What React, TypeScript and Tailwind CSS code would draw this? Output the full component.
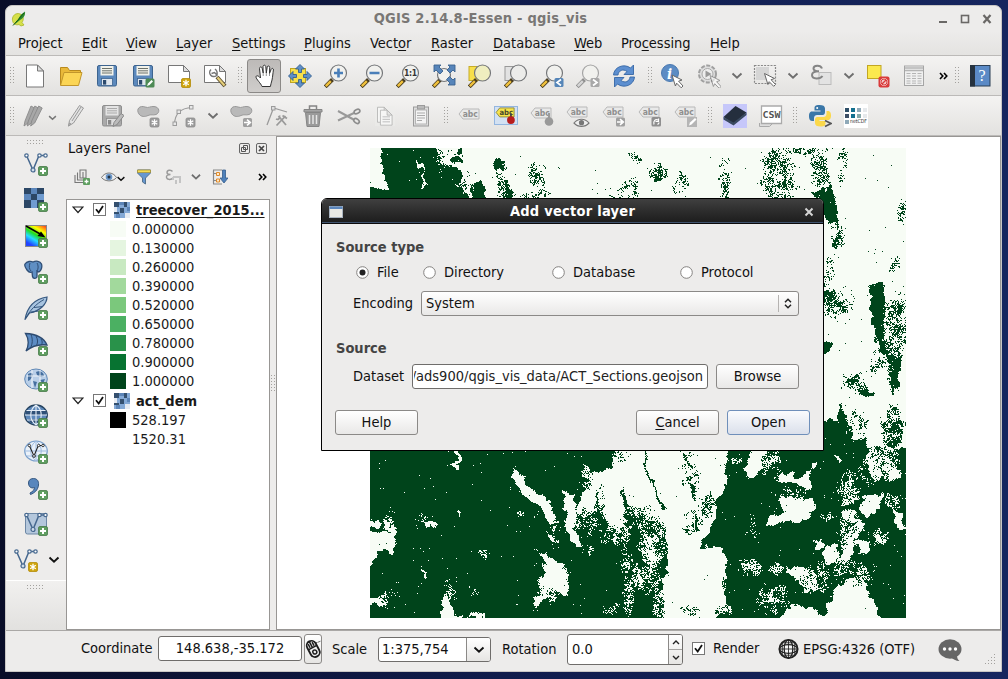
import React from "react";

type Pt = [number, number];
type Sheet = { ox: number; oy: number; s: number };

/* ---------- raster layer ---------- */

const MAP_X = 370;
const MAP_Y = 148;
const MAP_W = 536;
const MAP_H = 470;

const TOP: Sheet = { ox: 365, oy: 140, s: 2.85 };
const WEST: Sheet = { ox: 365, oy: 445, s: 3 };
const EAST: Sheet = { ox: 635, oy: 445, s: 3 };

const poly = (sh: Sheet, dark: boolean, c: number[]) => {
  const pts: Pt[] = [];
  for (let i = 0; i < c.length; i += 2) pts.push([sh.ox + c[i] / sh.s - MAP_X, sh.oy + c[i + 1] / sh.s - MAP_Y]);
  const xs = pts.map((p) => p[0]);
  const ys = pts.map((p) => p[1]);
  return { pts, dark, x0: Math.min(...xs) - 4, x1: Math.max(...xs) + 4, y0: Math.min(...ys) - 4, y1: Math.max(...ys) + 4 };
};

const shapes = [
  poly(TOP, true, [40, 10, 205, 10, 212, 60, 272, 82, 275, 130, 305, 190, -10, 190, -10, 138, 60, 138, 48, 80]),
  poly(TOP, false, [135, 52, 150, 60, 168, 78, 172, 130, 165, 130, 163, 85, 150, 75]),
  poly(TOP, false, [22, 120, 34, 120, 32, 140, 20, 135]),
  poly(TOP, true, [245, 45, 275, 48, 275, 62, 248, 58]),
  poly(TOP, true, [262, 22, 278, 22, 270, 40, 258, 38]),
  poly(TOP, true, [306, 130, 325, 108, 344, 130, 342, 190, 298, 180]),
  poly(TOP, true, [376, 125, 400, 116, 422, 150, 414, 174, 391, 165]),
  poly(TOP, true, [367, 58, 393, 56, 389, 82, 369, 84]),
  poly(TOP, true, [369, 80, 390, 120, 375, 106]),
  poly(TOP, true, [1276, 68, 1309, 64, 1322, 112, 1298, 124]),
  poly(TOP, true, [1273, 146, 1332, 130, 1342, 180, 1352, 235, 1323, 237, 1298, 190]),
  poly(TOP, true, [1140, 111, 1164, 106, 1162, 139, 1141, 142]),
  poly(TOP, true, [1170, 56, 1199, 51, 1205, 79, 1176, 90]),
  poly(TOP, true, [817, 84, 842, 85, 860, 108, 823, 113]),
  poly(TOP, true, [1300, 433, 1337, 428, 1342, 457, 1300, 462]),
  poly(TOP, true, [1300, 573, 1327, 578, 1327, 602, 1300, 610]),
  poly(TOP, true, [1395, 668, 1414, 678, 1402, 702, 1368, 692]),
  poly(TOP, true, [1405, 703, 1452, 718, 1447, 734, 1408, 722]),
  poly(TOP, true, [1436, 413, 1478, 406, 1480, 490, 1474, 560, 1500, 598, 1524, 608, 1528, 660, 1505, 736, 1492, 690, 1488, 640, 1458, 570, 1440, 510]),
  poly(TOP, true, [1486, 773, 1520, 760, 1532, 820, 1522, 867, 1488, 882]),
  poly(TOP, true, [1300, 800, 1342, 795, 1356, 752, 1376, 790, 1392, 822, 1385, 850, 1425, 850, 1428, 980, 1190, 980, 1250, 920]),
  poly(TOP, true, [1425, 880, 1470, 875, 1545, 880, 1560, 980, 1425, 980]),
  poly(TOP, false, [1435, 905, 1470, 900, 1475, 960, 1440, 960]),
  poly(WEST, false, [272, 10, 284, 10, 284, 50, 270, 75, 260, 65, 273, 50]),
  poly(WEST, false, [433, 92, 450, 72, 470, 95, 485, 120, 520, 150, 559, 166, 560, 195, 577, 237, 545, 230, 525, 185, 476, 149, 454, 114]),
  poly(WEST, false, [508, 310, 550, 336, 600, 368, 612, 390, 606, 454, 560, 434, 545, 465, 506, 489, 504, 460, 525, 440, 517, 397, 536, 390, 536, 350]),
  poly(WEST, false, [-10, 263, 62, 262, 58, 216, 88, 232, 94, 270, 79, 329, 62, 306, 40, 316, 20, 352, -10, 367]),
  poly(WEST, false, [-10, 221, 47, 230, 42, 246, -10, 238]),
  poly(WEST, false, [-10, 454, 55, 450, 70, 474, -10, 474]),
  poly(WEST, false, [225, 535, 233, 443, 255, 448, 264, 495, 300, 535]),
  poly(WEST, false, [298, 522, 325, 497, 354, 502, 366, 535, 345, 517, 325, 512]),
  poly(WEST, false, [181, 222, 206, 228, 214, 252, 186, 244]),
  poly(WEST, false, [266, 196, 287, 204, 284, 218]),
  poly(WEST, false, [166, 360, 192, 400, 180, 406]),
  poly(WEST, false, [594, 141, 626, 151, 632, 230, 624, 255, 651, 303, 630, 312, 606, 250, 599, 190]),
  poly(WEST, false, [656, 60, 690, 82, 740, 65, 755, 10, 820, 10, 820, 215, 798, 200, 772, 120, 768, 130, 788, 294, 766, 264, 728, 242, 704, 197, 695, 125, 690, 204, 668, 200, 640, 210, 628, 204, 658, 120, 678, 105, 654, 90]),
  poly(WEST, false, [543, 263, 575, 282, 565, 292]),
  poly(EAST, false, [-12, 10, 272, 10, 268, 150, 246, 160, 240, 215, 190, 305, 260, 303, 278, 340, 268, 400, 272, 450, 288, 490, 250, 490, 235, 535, 85, 535, 78, 480, 80, 392, 95, 380, 92, 280, 78, 235, 30, 215, -12, 180]),
  poly(EAST, true, [26, 18, 32, 18, 35, 82, 58, 105, 66, 150, 90, 188, 86, 200, 60, 160, 53, 112, 30, 90]),
  poly(EAST, true, [135, 15, 155, 45, 175, 70, 160, 75, 140, 35]),
  poly(EAST, true, [163, 115, 178, 115, 180, 158, 165, 155]),
  poly(EAST, true, [175, 205, 188, 215, 186, 262, 172, 255]),
  poly(EAST, false, [350, 10, 392, 10, 384, 60, 354, 97, 320, 80]),
  poly(EAST, false, [423, 88, 465, 81, 482, 96, 520, 77, 527, 120, 505, 133, 486, 111, 425, 107]),
  poly(EAST, false, [430, 155, 530, 157, 542, 185, 509, 226, 450, 231, 396, 239, 398, 214, 450, 200, 436, 180]),
  poly(EAST, false, [568, 296, 604, 301, 606, 350, 576, 358, 563, 325]),
  poly(EAST, false, [535, 286, 560, 280, 564, 309, 541, 309]),
  poly(EAST, false, [526, 48, 546, 50, 539, 72, 521, 68]),
  poly(EAST, false, [685, 146, 740, 148, 739, 184, 700, 215, 675, 199, 685, 170]),
  poly(EAST, false, [620, 194, 659, 196, 662, 230, 625, 234]),
  poly(EAST, false, [771, 190, 799, 201, 808, 256, 781, 244]),
  poly(EAST, false, [750, 171, 785, 174, 774, 191]),
  poly(EAST, false, [713, 258, 749, 266, 744, 297, 718, 290]),
  poly(EAST, false, [615, 258, 649, 245, 660, 290, 644, 350, 607, 350, 620, 300]),
  poly(EAST, false, [663, 291, 699, 284, 707, 319, 670, 322]),
  poly(EAST, false, [661, 215, 685, 235, 672, 284, 650, 274]),
  poly(EAST, false, [593, 425, 650, 396, 686, 411, 719, 480, 748, 535, 550, 535, 585, 470]),
  poly(EAST, false, [448, 366, 530, 368, 552, 430, 512, 439, 486, 410]),
  poly(EAST, false, [426, 535, 470, 476, 545, 491, 565, 535]),
  poly(EAST, false, [745, 58, 784, 64, 798, 99, 765, 107, 746, 80]),
  poly(EAST, false, [740, 10, 780, 10, 769, 57, 746, 44]),
  poly(EAST, false, [697, 10, 713, 10, 712, 56, 691, 54]),
  poly(EAST, false, [594, 24, 619, 44, 608, 56]),
  poly(EAST, false, [636, 136, 677, 160, 640, 170, 620, 182]),
];

/* speckled areas: centre, radii, strength */
const zone = (sh: Sheet, x: number, y: number, rx: number, ry: number, k: number) => ({
  x: sh.ox + x / sh.s - MAP_X,
  y: sh.oy + y / sh.s - MAP_Y,
  rx: rx / sh.s,
  ry: ry / sh.s,
  k,
});

const zones = [
  zone(TOP, 225, 50, 35, 40, 0.8),
  zone(TOP, 285, 130, 30, 50, 0.9),
  zone(TOP, 395, 120, 40, 60, 0.55),
  zone(TOP, 490, 100, 30, 60, 0.7),
  zone(TOP, 485, 160, 50, 25, 1.0),
  zone(TOP, 765, 50, 50, 20, 0.6),
  zone(TOP, 740, 145, 60, 50, 0.55),
  zone(TOP, 835, 90, 35, 35, 0.95),
  zone(TOP, 900, 130, 30, 50, 0.95),
  zone(TOP, 1025, 110, 22, 80, 0.95),
  zone(TOP, 1175, 70, 55, 55, 1.05),
  zone(TOP, 1180, 130, 70, 50, 1.0),
  zone(TOP, 1230, 30, 110, 16, 0.8),
  zone(TOP, 1295, 90, 35, 70, 1.1),
  zone(TOP, 1360, 60, 20, 90, 0.7),
  zone(TOP, 1345, 270, 25, 70, 1.05),
  zone(TOP, 1320, 380, 30, 60, 0.85),
  zone(TOP, 1350, 470, 55, 60, 0.95),
  zone(TOP, 1530, 200, 25, 35, 0.9),
  zone(TOP, 1510, 355, 25, 30, 0.9),
  zone(TOP, 1440, 320, 20, 20, 0.7),
  zone(TOP, 1515, 530, 50, 110, 1.45),
  zone(TOP, 1470, 640, 40, 50, 0.85),
  zone(TOP, 1400, 690, 60, 35, 0.9),
  zone(TOP, 1500, 820, 45, 80, 0.95),
  zone(TOP, 1400, 810, 45, 50, 0.9),
  zone(TOP, 1470, 920, 80, 60, 0.7),
  zone(WEST, 75, 230, 30, 50, 0.7),
  zone(WEST, 165, 215, 25, 20, 0.6),
  zone(WEST, 70, 460, 35, 35, 0.7),
  zone(WEST, 255, 435, 28, 38, 1.0),
  zone(WEST, 330, 435, 28, 25, 0.75),
  zone(WEST, 355, 330, 25, 25, 0.65),
  zone(WEST, 465, 205, 30, 20, 0.65),
  zone(WEST, 545, 450, 45, 30, 0.7),
  zone(WEST, 585, 250, 40, 40, 0.55),
  zone(WEST, 665, 90, 25, 50, 0.8),
  zone(WEST, 665, 235, 50, 55, 0.95),
  zone(WEST, 708, 180, 22, 70, 1.0),
  zone(WEST, 745, 265, 60, 40, 1.15),
  zone(WEST, 785, 400, 25, 150, 0.95),
  zone(WEST, 765, 40, 35, 40, 0.6),
  zone(WEST, 740, 495, 40, 25, 0.6),
  zone(WEST, 660, 315, 40, 20, 0.75),
  zone(EAST, 10, 215, 60, 45, 1.15),
  zone(EAST, 50, 300, 50, 110, 1.4),
  zone(EAST, 30, 400, 65, 60, 1.3),
  zone(EAST, 70, 480, 25, 60, 0.9),
  zone(EAST, 165, 80, 35, 90, 0.65),
  zone(EAST, 215, 185, 35, 50, 0.85),
  zone(EAST, 170, 235, 45, 45, 0.75),
  zone(EAST, 170, 490, 45, 25, 0.75),
  zone(EAST, 270, 500, 35, 25, 0.9),
  zone(EAST, 300, 45, 35, 15, 0.7),
  zone(EAST, 345, 365, 45, 32, 1.25),
  zone(EAST, 405, 50, 35, 65, 0.9),
  zone(EAST, 460, 140, 60, 25, 0.7),
  zone(EAST, 430, 370, 50, 22, 1.0),
  zone(EAST, 410, 460, 60, 55, 0.95),
  zone(EAST, 545, 400, 60, 60, 0.85),
  zone(EAST, 650, 380, 80, 50, 0.95),
  zone(EAST, 580, 215, 30, 20, 0.8),
  zone(EAST, 640, 130, 50, 65, 0.95),
  zone(EAST, 695, 90, 40, 40, 0.85),
  zone(EAST, 765, 60, 50, 60, 0.75),
  zone(EAST, 640, 260, 50, 70, 0.75),
  zone(EAST, 730, 275, 40, 30, 0.7),
  zone(EAST, 775, 165, 40, 30, 0.75),
  zone(EAST, 340, 240, 50, 50, 0.35),
];

const hash = (x: number, y: number, s: number) => {
  let h = (x * 374761393 + y * 668265263 + s * 974711) | 0;
  h = Math.imul(h ^ (h >>> 13), 1274126177);
  h = Math.imul(h ^ (h >>> 15), 2246822519);
  return ((h ^ (h >>> 16)) >>> 0) / 4294967296;
};

const smooth = (x: number, y: number, s: number) => {
  const ix = Math.floor(x);
  const iy = Math.floor(y);
  const fx = x - ix;
  const fy = y - iy;
  const a = hash(ix, iy, s) * (1 - fx) + hash(ix + 1, iy, s) * fx;
  const b = hash(ix, iy + 1, s) * (1 - fx) + hash(ix + 1, iy + 1, s) * fx;
  return a * (1 - fy) + b * fy;
};

const inside = (x: number, y: number, pts: Pt[]) => {
  let r = false;
  for (let i = 0, j = pts.length - 1; i < pts.length; j = i++) {
    const [xi, yi] = pts[i];
    const [xj, yj] = pts[j];
    if (yi > y !== yj > y && x < ((xj - xi) * (y - yi)) / (yj - yi) + xi) r = !r;
  }
  return r;
};

const isForest = (x: number, y: number) => {
  const dx = x + (smooth(x / 4, y / 4, 1) - 0.5) * 6 + (hash(x, y, 2) - 0.5) * 1.4;
  const dy = y + (smooth(x / 4, y / 4, 3) - 0.5) * 6 + (hash(x, y, 4) - 0.5) * 1.4;
  let dark = y > 302;
  for (const p of shapes) {
    if (dx < p.x0 || dx > p.x1 || dy < p.y0 || dy > p.y1) continue;
    if (inside(dx, dy, p.pts)) dark = p.dark;
  }
  let k = 0;
  for (const z of zones) {
    const u = (x - z.x) / z.rx;
    const v = (y - z.y) / z.ry;
    const d = u * u + v * v;
    if (d < 1) k = Math.max(k, z.k * (1 - d));
  }
  const n = 0.35 * smooth(x / 5, y / 6, 8) + 0.3 * smooth(x / 1.7, y / 1.9, 5) + 0.35 * hash(x, y, 6);
  if (n > 0.92 - 0.4 * Math.sqrt(k)) return !dark;
  if (hash(x, y, 7) < (dark ? 0.003 : 0.0015)) return !dark;
  return dark;
};

const buildForest = () => {
  let d = "";
  for (let y = 0; y < MAP_H; y++) {
    let start = -1;
    for (let x = 0; x <= MAP_W; x++) {
      const covered = x < 453 && y > 52 && y < 301;
      const on = x < MAP_W && !covered && isForest(x, y);
      if (on && start < 0) start = x;
      if (!on && start >= 0) {
        d += `M${start} ${y}h${x - start}v1h${start - x}z`;
        start = -1;
      }
    }
  }
  return d;
};

const forestPath = buildForest();

/* ---------- icon helpers ---------- */

const Ic = ({ children, className = "size-6", vb = "0 0 24 24" }: { children: React.ReactNode; className?: string; vb?: string }) => (
  <svg viewBox={vb} className={"shrink-0 " + className} fill="none">
    {children}
  </svg>
);

const Badge = ({ x = 14, y = 14, kind = "plus" }: { x?: number; y?: number; kind?: string }) => {
  const fill: Record<string, string> = { plus: "#5f9e60", star: "#cfa50e", edit: "#4d8a55", gstar: "#9c9c9c", garrow: "#a0a0a0", blue: "#5686b8", gray: "#a8a8a8" };
  const edge: Record<string, string> = { plus: "#467a48", star: "#b48c08", gstar: "#8c8c8c" };
  return (
    <g transform={`translate(${x} ${y})`}>
      <rect x=".5" y=".5" width="9" height="9" rx="1.5" fill={fill[kind]} stroke={edge[kind] ?? "none"} strokeWidth=".8" />
      {kind === "plus" && <path d="M5 2v6M2 5h6" stroke="#fff" strokeWidth="2" />}
      {(kind === "star" || kind === "gstar") && <path d="M5 1.700v6.600M2.200 3.300l5.600 3.400M7.800 3.300L2.200 6.700" stroke="#fff" strokeWidth="1.300" />}
      {kind === "edit" && <path d="M2 8l1-2.500L6.500 2 8 3.500 4.500 7z" fill="#fff" />}
      {kind === "garrow" && <path d="M1.500 5h5M4.500 2.200L7.800 5 4.500 7.800" stroke="#fff" strokeWidth="1.600" />}
      {kind === "blue" && <path d="M7 2L3 5l4 3" stroke="#fff" strokeWidth="1.700" />}
      {kind === "gray" && <path d="M3 2l4 3-4 3" stroke="#fff" strokeWidth="1.700" />}
    </g>
  );
};

const Lens = ({ x = 14.5, y = 9, r = 8, fill = "#f1f1ee", dim = false }: { x?: number; y?: number; r?: number; fill?: string; dim?: boolean }) => (
  <g>
    <path d="M1.200 22.800L8.500 15.500" stroke={dim ? "#8f8f8f" : "#4a3d20"} strokeWidth="4" />
    <path d="M1.800 22.200L6.800 17.200" stroke={dim ? "#d5d5d5" : "#f0c13c"} strokeWidth="2.400" />
    <circle cx={x} cy={y} r={r} fill={fill} stroke={dim ? "#a5a5a5" : "#75777a"} strokeWidth="1.200" />
  </g>
);

const Cursor = ({ x = 12, y = 11 }: { x?: number; y?: number }) => (
  <path transform={`translate(${x} ${y})`} d="M0 0l10 5-3.400 1.200L11 11l-1.800 1.800-4.500-4.600L3.400 11z" fill="#fff" stroke="#666" strokeWidth="1" />
);

const Page = ({ w = 17, h = 22, x = 3.5, y = 1 }: { w?: number; h?: number; x?: number; y?: number }) => (
  <g stroke="#777" strokeWidth="1">
    <path d={`M${x} ${y}h${w - 6}l6 6v${h - 6}h-${w}z`} fill="#fff" />
    <path d={`M${x + w - 6} ${y}v6h6z`} fill="#ddd" />
  </g>
);

const Floppy = ({ c = "#5c89bd", e = "#3d648f", dim = false }: { c?: string; e?: string; dim?: boolean }) => (
  <g>
    <rect x="2.500" y="1.500" width="19" height="20.500" rx="1.500" fill={c} stroke={e} />
    <rect x="5.500" y="2" width="13" height="9.500" fill={dim ? "#e4e4e4" : "#f2f2ea"} />
    <path d="M7 4.500h10M7 6.800h10M7 9h10" stroke={dim ? "#aaa" : "#6b716b"} />
    <rect x="6.500" y="14.500" width="11" height="7" fill={dim ? "#ddd" : "#dfe6ee"} stroke={e} strokeWidth=".8" />
    <rect x="8" y="16" width="3.200" height="4.600" fill={dim ? "#888" : "#2c4a6e"} />
  </g>
);

const Chev = ({ dark = false }: { dark?: boolean }) => (
  <svg viewBox="0 0 12 8" className="h-[8px] w-[12px] shrink-0" fill="none">
    <path d="M1.500 1.500L6 5.700l4.500-4.200" stroke={dark ? "#111" : "#6e6e6e"} strokeWidth="1.900" />
  </svg>
);

const Grip = () => (
  <svg viewBox="0 0 5 17" className="h-[17px] w-[5px] shrink-0">
    {[0, 1, 2, 3, 4, 5].map((i) => (
      <g key={i} fill="#a3a19e">
        <rect x="0" y={i * 3} width="1" height="1" />
        <rect x="3" y={i * 3} width="1" height="1" />
      </g>
    ))}
  </svg>
);

const HGrip = () => (
  <svg viewBox="0 0 17 5" className="h-[5px] w-[17px] shrink-0">
    {[0, 1, 2, 3, 4, 5].map((i) => (
      <g key={i} fill="#a3a19e">
        <rect y="0" x={i * 3} width="1" height="1" />
        <rect y="3" x={i * 3} width="1" height="1" />
      </g>
    ))}
  </svg>
);

const Cell = ({ children, w = "w-9" }: { children?: React.ReactNode; w?: string }) => (
  <div className={"flex h-full shrink-0 items-center justify-center " + w}>{children}</div>
);

const Blob = () => <path d="M3 10C-.5 5 4 1 9 3c4 1.500 5-1 9-.5C24 3 24 9 20 10.500c-3 1-5-.5-8 1S5 13 3 10z" fill="#b9b9b9" stroke="#999" />;

const Tag = ({ y = 6, on = false }: { y?: number; on?: boolean }) => (
  <g>
    <path d={`M1 ${y + 5}l4-5h16v10H5z`} fill={on ? "#f7e54a" : "#e9e9e9"} stroke={on ? "#8a8440" : "#b9b9b9"} />
    <text x="4.800" y={y + 8} fontSize="8.500" fontWeight="bold" fill={on ? "#4a4a2a" : "#8f8f8f"} fontFamily="DejaVu Sans, sans-serif" textLength="15">
      abc
    </text>
  </g>
);

const VNodes = ({ c = "#46688f" }: { c?: string }) => (
  <g stroke={c}>
    <path d="M2.500 3.500L9 18l6-14.500h6" strokeWidth="1.500" />
    <circle cx="2.500" cy="3.500" r="1.700" fill="#fff" strokeWidth="1.200" />
    <circle cx="9" cy="18" r="2" fill="#cfdcea" strokeWidth="1.200" />
    <circle cx="15.500" cy="3.500" r="1.700" fill="#fff" strokeWidth="1.200" />
    <circle cx="21.500" cy="3.500" r="1.700" fill="#fff" strokeWidth="1.200" />
  </g>
);

const Checker = () => (
  <g shapeRendering="crispEdges">
    <rect width="20" height="20" fill="#6f9bd0" />
    <path d="M0 0h7v6H0zM13 0h7v6h-7zM7 6h6v6H7zM0 12h7v8H0zM13 12h7v8h-7z" fill="#2c4766" />
    <path d="M7 0h6v6H7zM0 6h7v6H0z" fill="#5b86bb" />
  </g>
);

const MiniRaster = () => (
  <Ic className="size-4" vb="0 0 16 16">
    <g shapeRendering="crispEdges">
      <rect width="16" height="16" fill="#84a9d6" />
      <path d="M0 0h5v5H0zM10 0h3v5h-3zM6 6h4v5H6zM0 10h5v2H0z" fill="#34506f" />
      <path d="M5 0h5v3H5zM13 5h3v4h-3zM2 12h4v4H2z" fill="#5c85b8" />
      <path d="M0 5h3v5H0zM11 11h5v5h-5z" fill="#e6ebf2" />
    </g>
  </Ic>
);

/* ---------- toolbars ---------- */

const MainToolbar = () => (
  <div className="flex h-10 shrink-0 items-center border-b border-[#bcbab8] bg-linear-to-b from-[#f4f3f2] to-[#e3e2e0] pl-[4px]">
    <Grip />
    <Cell w="ml-[2px] w-9"><Ic><Page /></Ic></Cell>
    <Cell>
      <Ic><path d="M1.500 21V3.500h7l2 3h11V10" fill="#e9b93a" stroke="#b98a1d" /><path d="M1.500 21.500L5 8.500h18L19.500 21.500z" fill="#fbd555" stroke="#c2962b" /></Ic>
    </Cell>
    <Cell><Ic><Floppy /></Ic></Cell>
    <Cell><Ic><Floppy /><Badge kind="edit" /></Ic></Cell>
    <Cell><Ic><Page w={21} h={17} x={1.5} y={1.5} /><Badge kind="star" /></Ic></Cell>
    <Cell>
      <Ic>
        <Page w={21} h={17} x={1.5} y={1.5} />
        <path d="M14 13l8 9" stroke="#5d5030" strokeWidth="4" /><path d="M14.500 13.500l7 8" stroke="#e6cf7a" strokeWidth="2" />
        <path d="M8 5.500a4 4 0 1 0 5.500 6M12 5c1.500 1 2.500 3 2 6l-2.500-2.500-3 1" stroke="#777" strokeWidth="1.500" />
      </Ic>
    </Cell>
    <Cell w="w-[13px] pl-px"><Grip /></Cell>
    <Cell>
      <div className="flex h-[34px] w-[34px] items-center justify-center rounded-[3px] border border-[#8b8987] bg-linear-to-b from-[#bdbab8] to-[#cfcdcb] pl-[2px]">
        <Ic>
          <path d="M9 22.500c-1-3-6-7.500-6-9.500s2.500-1.500 4.500 1L6.500 4.500c0-2 2.300-2 2.700 0L10.200 9 10 2.700c0-2 2.600-2 2.800 0L13.300 9l.9-5.800c.3-1.800 2.600-1.500 2.500.3L16.500 9.500l1.700-4.300c.7-1.500 2.500-.8 2.200.8-.6 4-.6 6-1.400 10-.4 2.500-1.400 4-1.600 6.500z" fill="#fff" stroke="#333" />
          <path d="M10.200 9v3M13.300 9v3M16.500 9.500v2.500" stroke="#777" strokeWidth=".8" />
        </Ic>
      </div>
    </Cell>
    <Cell>
      <Ic>
        <rect x="2.500" y="4.500" width="15" height="14" fill="#f8e04a" stroke="#bfa520" />
        <path d="M12 .500l4.500 4.500h-3v3.500h-3V5h-3zM12 23.500L7.500 19h3v-3.500h3V19h3zM.500 12L5 7.500v3h3.500v3H5v3zM23.500 12L19 7.500v3h-3.500v3H19v3z" fill="#5f8fc8" stroke="#34608f" strokeWidth=".9" />
      </Ic>
    </Cell>
    <Cell><Ic><Lens /><path d="M14.500 4.500v9M10 9h9" stroke="#4a7fb9" strokeWidth="2.600" /></Ic></Cell>
    <Cell><Ic><Lens /><path d="M9.500 9h10" stroke="#4a7fb9" strokeWidth="2.600" /></Ic></Cell>
    <Cell>
      <Ic><Lens /><text x="8" y="12.200" fontSize="8.500" fontWeight="bold" fill="#333" textLength="13" fontFamily="DejaVu Sans, sans-serif">1:1</text></Ic>
    </Cell>
    <Cell>
      <Ic>
        <Lens x={12} y={11} r={6.5} />
        <path d="M2 1h7L7 3l4 4-3 3-4-4-2 2zM23 1h-7l2 2-3 3 3 3 3-3 2 2zM23 21h-7l2-2-3.500-3.500 3-3L21 16l2-2z" fill="#5785ba" stroke="#3a628f" strokeWidth=".9" />
      </Ic>
    </Cell>
    <Cell><Ic><rect x="1" y="2.500" width="10" height="14" fill="#f8e04a" stroke="#c5ab2a" /><Lens fill="#efeebf" /></Ic></Cell>
    <Cell><Ic><rect x="1" y="2.500" width="10" height="14" fill="#e2e2e2" stroke="#999" /><Lens fill="#ececea" /></Ic></Cell>
    <Cell><Ic><Lens /><Badge kind="blue" x={14} y={13.5} /></Ic></Cell>
    <Cell><Ic><Lens dim /><Badge kind="gray" x={14} y={13.5} /></Ic></Cell>
    <Cell>
      <Ic>
        <path d="M1.500 11C2 3 12-1 18.500 4L21.500 1v9.500H12l3-3C11 4.500 6.500 6.500 6 11z" fill="#5d8fd0" stroke="#3566a5" strokeWidth=".9" />
        <path d="M22.500 13c-.5 8-10.500 12-17 7L2.500 23v-9.500H12l-3 3c4 3 8.500 1 9-3.500z" fill="#5d8fd0" stroke="#3566a5" strokeWidth=".9" />
      </Ic>
    </Cell>
    <Cell w="w-3 pl-1"><Grip /></Cell>
    <Cell>
      <Ic>
        <circle cx="10" cy="9" r="8.500" fill="#5c8cc4" stroke="#4a79b0" />
        <text x="7" y="14.500" fontSize="15" fontWeight="bold" fontStyle="italic" fill="#fff" fontFamily="DejaVu Serif, serif">i</text>
        <Cursor />
      </Ic>
    </Cell>
    <Cell w="w-[37px]">
      <Ic>
        <circle cx="10.500" cy="10" r="8.500" fill="#dedede" stroke="#a0a0a0" strokeWidth="2" strokeDasharray="4 1.500" />
        <circle cx="10.500" cy="10" r="5.500" fill="#eee" stroke="#aaa" /><path d="M8.500 6.500l6 3.500-6 3.500z" fill="#999" />
        <g opacity=".6"><Cursor x={13} y={11.5} /></g>
      </Ic>
    </Cell>
    <Cell w="w-5"><Chev /></Cell>
    <Cell>
      <Ic>
        <rect x="3" y="3" width="13" height="13" fill="#d5d5d5" /><rect x="1.500" y="1.500" width="21" height="18" stroke="#888" strokeDasharray="2 1.200" strokeWidth="1.200" />
        <Cursor x={11.5} y={9.5} />
      </Ic>
    </Cell>
    <Cell w="w-5"><Chev /></Cell>
    <Cell>
      <Ic>
        <rect x="10" y="8.500" width="12" height="12" fill="#e3e3e3" stroke="#bbb" />
        <path d="M13 4.500C11.500 .5 4.500 1 4.500 4.500c0 2 2.500 2.800 5.500 2.800-4 0-7 .7-7 3.700 0 4.500 8 4.500 10.500 1" stroke="#858585" strokeWidth="2" />
      </Ic>
    </Cell>
    <Cell w="w-5"><Chev /></Cell>
    <Cell w="w-[37px]">
      <Ic>
        <rect x="1.500" y="1.500" width="13.500" height="13" fill="#fbe94e" stroke="#c2a623" />
        <rect x="12.500" y="12.500" width="11" height="11" rx="2" fill="#d93b3b" /><circle cx="18" cy="18" r="3.700" fill="#fff" /><circle cx="18" cy="18" r="3" fill="#f3c9c9" stroke="#d93b3b" /><path d="M16 20l4-4" stroke="#d93b3b" strokeWidth="1.200" />
      </Ic>
    </Cell>
    <Cell w="w-[35px]">
      <Ic>
        <rect x="2.500" y="2" width="19" height="19.500" fill="#f0f0f0" stroke="#a5a5a5" /><path d="M3 4h18M3 6.500h18" stroke="#b5b5b5" strokeWidth="1.500" />
        <path d="M4.500 9.500h4M4.500 12h4M4.500 14.500h4M4.500 17h4M4.500 19.200h4M10 9.500h4M10 12h4M10 14.500h4M10 17h4M10 19.200h4M15.500 9.500h4M15.500 12h4M15.500 14.500h4M15.500 17h4M15.500 19.200h4" stroke="#b5b5b5" />
      </Ic>
    </Cell>
    <Cell w="w-6 pl-[2px]">
      <Ic className="h-2 w-[10px]" vb="0 0 10 8"><path d="M1 1l2.800 3L1 7M5 1l2.800 3L5 7" stroke="#000" strokeWidth="1.600" /></Ic>
    </Cell>
    <Grip />
    <Cell w="ml-[2px] w-9">
      <Ic>
        <rect x="2.500" y="1.500" width="19.500" height="20.500" fill="#5b8ac6" stroke="#2b3e55" /><rect x="2" y="1" width="5" height="21.500" fill="#26323f" />
        <text x="10.500" y="17" fontSize="16" fill="#fff" fontFamily="Liberation Serif, serif">?</text>
      </Ic>
    </Cell>
  </div>
);

const G = "#9b9b9b";

const EditToolbar = () => (
  <div className="flex h-10 shrink-0 items-center border-b border-[#bcbab8] bg-linear-to-b from-[#f4f3f2] to-[#e3e2e0] pl-[4px]">
    <Grip />
    <Cell w="w-[43px] gap-[2px] pl-[5px]">
      <Ic>
        {[0, 5, 10].map((o) => (
          <path key={o} d={`M${2 + o / 1.5} 22l1-5L${9 + o / 1.3} 2l3.500 2L${6 + o / 1.5} 19z`} fill="#a8a8a8" stroke="#8a8a8a" strokeWidth=".9" />
        ))}
      </Ic>
      <svg viewBox="0 0 12 8" className="mt-1 h-[6px] w-[9px] shrink-0" fill="none"><path d="M1.500 1.500L6 5.700l4.500-4.200" stroke="#777" strokeWidth="2" /></svg>
    </Cell>
    <Cell><Ic><path d="M4.500 22l1-5.500L15.500 1.500l4 2.500-10 15z" fill="#e2e2e2" stroke={G} /><path d="M8 17L17 3M4.500 22l1-3 1.500 1z" stroke={G} /></Ic></Cell>
    <Cell><Ic><Floppy c="#aaa" e="#8f8f8f" dim /><path d="M13 22.500l1-4 7-9 3 2-7 9z" fill="#bbb" stroke="#8a8a8a" /></Ic></Cell>
    <Cell><Ic><Blob /><Badge kind="gstar" x={13.5} y={13.5} /></Ic></Cell>
    <Cell>
      <Ic>
        <path d="M2.500 21C2.500 10 8 4 20 3.500" stroke={G} strokeWidth="1.200" />
        <g fill="#e8e8e8" stroke={G}><rect x="1" y="18" width="3.500" height="3.500" /><rect x="5" y="6" width="3.500" height="3.500" /><rect x="17.500" y="1.500" width="3.500" height="3.500" /></g>
        <Badge kind="gstar" x={13.5} y={13.5} />
      </Ic>
    </Cell>
    <Cell w="w-[21px]"><Chev /></Cell>
    <Cell><Ic><Blob /><Badge kind="garrow" x={13.5} y={13.5} /></Ic></Cell>
    <Cell>
      <Ic>
        <path d="M2 21L8.500 4 22 8" stroke={G} strokeWidth="1.300" /><rect x="6.500" y="2.500" width="3.500" height="3.500" fill="#ddd" stroke={G} />
        <path d="M11.500 21.500l9-9.500M13.500 12l7.500 9M11 15c2 1 4 0 3.500-3.500M17.500 11.500l4.500 3" stroke="#9a9a9a" strokeWidth="1.800" />
      </Ic>
    </Cell>
    <Cell>
      <Ic>
        <path d="M4.500 8.500h15l-1.500 14H6z" fill="#9a9a9a" stroke="#858585" /><path d="M8.500 11v9M12 11v9M15.500 11v9" stroke="#e5e5e5" strokeWidth="1.500" />
        <path d="M3 5.500h18v2.500H3z" fill="#a5a5a5" stroke="#858585" /><path d="M8.500 5V2h7v3" stroke="#858585" strokeWidth="1.500" />
      </Ic>
    </Cell>
    <Cell>
      <Ic>
        <path d="M1 7l15.500 8.500M1 16.500L17 9" stroke="#999" strokeWidth="2" />
        <ellipse cx="20" cy="7.500" rx="3" ry="2" transform="rotate(-25 20 7.500)" stroke="#8d8d8d" strokeWidth="1.700" /><ellipse cx="19.500" cy="17" rx="3" ry="2" transform="rotate(35 19.500 17)" stroke="#8d8d8d" strokeWidth="1.700" />
      </Ic>
    </Cell>
    <Cell>
      <Ic className="size-5">
        <Page x={3} y={1.5} w={14} h={18} /><Page x={6.5} y={5} w={14} h={18} />
        <rect x="0" y="0" width="24" height="24" fill="#eeedec" opacity=".5" /><path d="M9 13h9M9 16h9M9 19h9" stroke="#b5b5b5" />
      </Ic>
    </Cell>
    <Cell>
      <Ic>
        <rect x="4.500" y="3" width="15" height="19" fill="#ddd" stroke={G} /><rect x="6.500" y="6" width="11" height="14" fill="#f4f4f4" stroke="#b5b5b5" /><rect x="8.500" y="1.500" width="7" height="3.500" fill="#bbb" stroke={G} />
        <path d="M8 9h8M8 11.500h8M8 14h8M8 16.500h5" stroke="#aaa" />
      </Ic>
    </Cell>
    <Cell w="w-[13px] pl-px"><Grip /></Cell>
    <Cell><Ic><Tag y={5} /></Ic></Cell>
    <Cell>
      <div className="flex h-[19px] w-6 items-center justify-center border border-[#94b6e0] bg-[#d3e1f2]">
        <Ic className="h-[18px] w-[22px]" vb="0 0 24 20"><Tag y={1} on /><path d="M17.500 7v6" stroke="#444" strokeWidth="2" /><circle cx="17.500" cy="14.500" r="4.300" fill="#b81d1d" /></Ic>
      </div>
    </Cell>
    <Cell><Ic><Tag y={4} /><path d="M19 9v6" stroke={G} strokeWidth="2" /><circle cx="19" cy="17.500" r="4.300" fill="#999" /></Ic></Cell>
    <Cell>
      <Ic><Tag y={3} /><path d="M8 19c4-5 11-5 15 0-4 4.500-11 4.500-15 0z" fill="#eee" stroke="#777" strokeWidth="1.200" /><circle cx="15.500" cy="18.700" r="2.600" fill="#777" /></Ic>
    </Cell>
    <Cell><Ic><Tag y={3} /><Badge kind="garrow" x={13.5} y={13} /></Ic></Cell>
    <Cell>
      <Ic><Tag y={3} /><rect x="13.500" y="13" width="9.500" height="9.500" rx="1.500" fill="#8f8f8f" /><path d="M16 20.500c-1-4 1.500-5.500 4-4.500M20.500 14.500v3h-3M19.500 20.500c1-.5 1.500-1 1.500-2" stroke="#fff" strokeWidth="1.200" /></Ic>
    </Cell>
    <Cell><Ic><Tag y={3} /><rect x="13" y="13" width="10" height="10" fill="#b5b5b5" /><path d="M15 21.500l1-3 5-4.500 1.500 1.500-5 5z" fill="#fff" /></Ic></Cell>
    <Cell w="w-[13px]"><Grip /></Cell>
    <Cell>
      <Ic>
        <rect width="24" height="24" fill="#c6c7fa" /><path d="M.5 13L12.500 2l11 6.500L10.500 20z" fill="#252f3e" /><path d="M.5 13l10 5.500v3L.5 15.500zM10.500 18.500l13-10v2.500l-13 10.500z" fill="#3a4a60" />
      </Ic>
    </Cell>
    <Cell>
      <Ic>
        <path d="M.500 19v3.500h10l3-3" fill="#ddd" stroke="#aaa" /><path d="M2.500 2h20v17.500h-20z" fill="#fff" stroke="#aaa" strokeWidth="1.300" />
        <text x="3.500" y="14" fontSize="8.500" fontWeight="bold" fill="#555" textLength="18" lengthAdjust="spacingAndGlyphs" fontFamily="DejaVu Sans Mono, monospace">CSW</text>
      </Ic>
    </Cell>
    <Cell w="w-[13px]"><Grip /></Cell>
    <Cell>
      <Ic>
        <path d="M11.500 1C7 1 6.500 2.500 6.500 4.500v2h6v1H4C1.500 7.500 1 10 1 12s.5 5 3 5h2v-3c0-2 1.500-3 3-3h5.500c2 0 2.500-1.500 2.500-3V4.500C17 2 15 1 11.500 1z" fill="#3b77a8" />
        <path d="M12.500 22.500c4.500 0 5-1.500 5-3.500v-2h-6v-1H20c2.500 0 3-2.500 3-4.500s-.5-4.500-3-4.500h-1.500v3c0 2-1.500 3-3 3H9.500C7.500 13 7 14.500 7 16v3c0 2.500 2 3.500 5.500 3.500z" fill="#fbd84a" />
        <circle cx="9.200" cy="4" r="1" fill="#fff" /><path d="M17 16.500l6 3-6 3" stroke="#555" strokeWidth="1.600" />
      </Ic>
    </Cell>
    <Cell>
      <Ic>
        <rect width="24" height="24" fill="#fff" />
        <g shapeRendering="crispEdges">
          <path d="M1 4h4v4H1z" fill="#2f4f68" /><path d="M7 4h4v4H7zM7 10h4v4H7z" fill="#14708f" /><path d="M13 4h4v4h-4zM1 16h4v4H1z" fill="#8fa9b8" /><path d="M1 10h4v4H1z" fill="#3d4f66" /><path d="M13 10h4v4h-4z" fill="#8aa" /><path d="M19 4h4v4h-4zM19 10h4v4h-4z" fill="#e6e9ec" />
        </g>
        <text x="6" y="18.500" fontSize="5.500" fill="#333" textLength="17" lengthAdjust="spacingAndGlyphs" fontFamily="DejaVu Sans, sans-serif">netCDF</text>
      </Ic>
    </Cell>
  </div>
);

const SideCell = ({ children }: { children: React.ReactNode }) => <div className="flex h-9 items-center justify-center">{children}</div>;

const SideToolbar = () => (
  <div className="flex w-[60px] shrink-0 flex-col">
    <div className="flex h-[10px] items-end justify-center pb-px pr-px"><HGrip /></div>
    <SideCell><Ic><VNodes /><Badge /></Ic></SideCell>
    <SideCell>
      <Ic><Checker /><Badge /></Ic>
    </SideCell>
    <SideCell>
      <Ic>
        <defs><linearGradient id="spectrum" x1="1" y1="0" x2=".4" y2="1"><stop offset="0" stopColor="#f22" /><stop offset=".3" stopColor="#ff0" /><stop offset=".55" stopColor="#2d2" /><stop offset=".75" stopColor="#2df" /><stop offset="1" stopColor="#24f" /></linearGradient></defs>
        <rect x="1.500" y="1.500" width="21" height="21" fill="url(#spectrum)" stroke="#888" /><path d="M2 2L18 11" stroke="#000" strokeWidth="1.500" /><path d="M21.500 13.500l-8-1.500 3.500-4.500z" fill="#000" /><Badge />
      </Ic>
    </SideCell>
    <SideCell>
      <Ic>
        <path d="M1 4c2-3 6-3 8-2 3-1.500 7-1 8.500 2C18.500 7 17 11 15 12l-2-1v6c-1 2-4 2-4.500-.5L8 12c-2 1-3.500 0-5-2S0 6 1 4z" fill="#5f8fc4" stroke="#2f4e75" strokeWidth="1.300" />
        <path d="M6 3c-1 3-1 6 1 8M13 3c1.500 2 1.500 6 0 8" stroke="#2f4e75" /><Badge />
      </Ic>
    </SideCell>
    <SideCell>
      <Ic><path d="M1 23.500C3 12 10 3 23 1c0 6-6 14-17.500 16z" fill="#a8c4e0" stroke="#35577f" strokeWidth="1.200" /><path d="M1 23.500C6 14 12 8 20 3.500M7 16l8-1M10 11.500l9-1" stroke="#35577f" /><Badge /></Ic>
    </SideCell>
    <SideCell>
      <Ic><path d="M1.500 1.500C12 2 20 6 23 13c-8-1-15 1-21 6 3-6 3-12-.5-17.500z" fill="#5c8cc4" stroke="#2c4a70" strokeWidth="1.300" /><path d="M7 2.500c2 5 1.500 9-.5 13.500M12 4c2 4 2 6 .5 9.500M17 7c1.500 2.500 1.500 3.500.5 6" stroke="#2c4a70" /><Badge /></Ic>
    </SideCell>
    <SideCell>
      <Ic>
        <ellipse cx="12" cy="11" rx="11.300" ry="10" fill="#b9cfe8" stroke="#5f87b5" /><path d="M4 6c3-2 5-1 5 1s-2 3-3 5l-2 1zM12 4c3-2 8 0 8 4l-4 1-3-2zM9 13l4 1-2 6zM16 12l5-1-2 5z" fill="#456f9f" /><path d="M3 8h18M8 2v18M16 2v18" stroke="#fff" strokeWidth=".8" /><Badge />
      </Ic>
    </SideCell>
    <SideCell>
      <Ic>
        <ellipse cx="12" cy="11" rx="11.300" ry="10" fill="#5d88ba" stroke="#26435f" strokeWidth="1.300" /><path d="M2 7h20v4H2zM4 15h16l-3 4H7z" fill="#2f5178" /><path d="M1 11h22M2.500 6.500h19M3 16h18M12 1v20M12 1C5 6 5 16 12 21M12 1c7 5 7 15 0 20" stroke="#e5eef8" strokeWidth="1.100" /><Badge />
      </Ic>
    </SideCell>
    <SideCell>
      <Ic>
        <ellipse cx="12" cy="11" rx="11.300" ry="10" fill="#eaf1f9" stroke="#7ba0cb" strokeWidth="1.200" /><path d="M1 11h22M3 16h18M12 1v20M12 1C5 6 5 16 12 21M12 1c7 5 7 15 0 20" stroke="#9dbbe0" />
        <g transform="translate(3.500 3) scale(.72)"><VNodes c="#222" /></g><Badge />
      </Ic>
    </SideCell>
    <SideCell>
      <Ic><path d="M9.500 2.500c3.500 0 5.500 2.500 5 6.500-.5 5-4 8-8 9.500l-.5-1.500c3-1.500 4.500-3.500 4.500-5.500-4 1.500-6-1.500-6-4.500s2-4.500 5-4.500z" fill="#5886bd" stroke="#35577f" /><Badge /></Ic>
    </SideCell>
    <SideCell>
      <Ic><rect x="1.500" y="1.500" width="21" height="20.500" rx="2" fill="#b4c7dc" stroke="#6c87a5" /><g transform="translate(0 -.5)"><VNodes /></g><Badge /></Ic>
    </SideCell>
    <div className="flex h-9 items-center gap-[10px] pl-[8px]">
      <Ic><VNodes /><Badge kind="star" /></Ic>
      <Chev dark />
    </div>
    <div className="mt-[2px] flex flex-1 items-start justify-center border-t border-white bg-linear-to-b from-[#f1f0ef] to-[#e2e1df] pr-px pt-1"><HGrip /></div>
  </div>
);

/* ---------- layers panel ---------- */

const Check = () => (
  <svg viewBox="0 0 13 13" className="size-[13px] shrink-0" fill="none">
    <rect x=".5" y=".5" width="12" height="12" fill="#fff" stroke="#777" />
    <path d="M3 6.200l2.700 3.300L10 3" stroke="#111" strokeWidth="1.800" />
  </svg>
);

const ramp: [string, string][] = [
  ["bg-[#f7fcf5]", "0.000000"],
  ["bg-[#e5f5e0]", "0.130000"],
  ["bg-[#c8e9c1]", "0.260000"],
  ["bg-[#a2d99c]", "0.390000"],
  ["bg-[#7bc87c]", "0.520000"],
  ["bg-[#4bb062]", "0.650000"],
  ["bg-[#29924a]", "0.780000"],
  ["bg-[#077331]", "0.900000"],
  ["bg-[#00441b]", "1.000000"],
];

const LayerRow = ({ name, current = false }: { name: string; current?: boolean }) => (
  <div className="flex h-[19px] items-center pl-[5px]">
    <svg viewBox="0 0 12 8" className="mr-[9px] h-2 w-3 shrink-0" fill="none"><path d="M1 1h10L6 6.500z" stroke="#222" strokeWidth="1.200" /></svg>
    <div className="mr-[8px] flex"><Check /></div>
    <MiniRaster />
    <span className={"ml-[6px] whitespace-nowrap font-bold " + (current ? "underline decoration-1 underline-offset-2" : "")}>{name}</span>
  </div>
);

const Swatch = ({ color, label }: { color: string; label: string }) => (
  <div className="flex h-[19px] items-center pl-[43px]">
    <div className={"mr-[6px] size-4 shrink-0 " + color} />
    <span>{label}</span>
  </div>
);

const LayersPanel = () => (
  <div className="flex w-[204px] shrink-0 flex-col">
    <div className="flex h-6 items-center pl-[2px] pr-[3px]">
      <span className="flex-1">Layers Panel</span>
      <Ic className="mr-[6px] size-[11px]" vb="0 0 11 11"><rect x=".5" y=".5" width="10" height="10" rx="1.500" stroke="#666" /><path d="M4.500 2.500h4v4h-4zM2.500 4.500h4v4h-4z" stroke="#555" /></Ic>
      <Ic className="size-[11px]" vb="0 0 11 11"><rect x=".5" y=".5" width="10" height="10" rx="1.500" stroke="#666" /><path d="M3 3l5 5M8 3L3 8" stroke="#444" strokeWidth="1.700" /></Ic>
    </div>
    <div className="flex h-[39px] items-center pb-[5px] pl-[8px]">
      <Ic className="size-4" vb="0 0 16 16"><path d="M1 6v7.500h9M3.500 3.500V11h8M6 1h6v8H6zM9 3v6" stroke="#777" strokeWidth="1.100" /><rect x="9" y="9" width="7" height="7" rx="1" fill="#5f9e60" /><path d="M12.500 10.500v4M10.500 12.500h4" stroke="#fff" strokeWidth="1.300" /></Ic>
      <Ic className="ml-[11px] size-4" vb="0 0 16 16"><path d="M.5 8.500C4 2.500 12 2.500 15.500 8.500 12 13 4 13 .5 8.500z" fill="#eee" stroke="#777" /><circle cx="8" cy="8" r="3.300" fill="#6b96c8" /><circle cx="8" cy="8" r="1.500" fill="#234" /></Ic>
      <div className="mt-1 -ml-[2px] mr-[2px] flex scale-75"><Chev dark /></div>
      <Ic className="ml-[7px] size-4" vb="0 0 16 16"><path d="M1.500 1h13v3L9.500 9v6L6.500 13V9l-5-5z" fill="#6797d0" stroke="#55738f" /><path d="M1.500 1h13v2.500h-13z" fill="#f5dd55" stroke="#a8953b" strokeWidth=".8" /></Ic>
      <Ic className="ml-[13px] size-4" vb="0 0 16 16"><path d="M7.500 2.500C6 .5 2 1 2 3.500 2 5 4 5.500 5.500 5.500 3 5.500 1 6.500 1.500 8.500c.5 2.500 5 2.500 6.500.5" stroke="#999" strokeWidth="1.400" /><path d="M8 8h7v6M8 8v3M11 11v4" stroke="#c4c4c4" strokeWidth="2" /></Ic>
      <div className="ml-[9px] flex scale-90"><Chev /></div>
      <Ic className="ml-[10px] size-4" vb="0 0 16 16"><path d="M1.500 1.500v13M1.500 4.500h3M1.500 11.500h3M1 1h9M1 15h9" stroke="#888" strokeWidth="1.200" /><path d="M4.500 3.500h3v3h-3zM4.500 10h3v3h-3z" fill="#fbe9cc" stroke="#e08a2a" /><path d="M10.500 1h3v8H16l-4 5-4-5h2.500z" fill="#4f81bb" stroke="#355d8c" strokeWidth=".8" /></Ic>
      <Ic className="ml-auto mr-[2px] h-2 w-[10px]" vb="0 0 10 8"><path d="M1 1l2.800 3L1 7M5 1l2.800 3L5 7" stroke="#000" strokeWidth="1.600" /></Ic>
    </div>
    <div className="flex-1 overflow-hidden border border-[#989694] bg-white text-[#1a1a1a]">
      <LayerRow name="treecover_2015..." current />
      {ramp.map(([c, l]) => (
        <Swatch key={l} color={c} label={l} />
      ))}
      <div className="pt-px">
        <LayerRow name="act_dem" />
        <Swatch color="bg-black" label="528.197" />
        <Swatch color="bg-white" label="1520.31" />
      </div>
    </div>
  </div>
);

/* ---------- dialog ---------- */

const Radio = ({ label, on = false, w }: { label: string; on?: boolean; w: string }) => (
  <div className={"flex shrink-0 items-center gap-[8px] " + w}>
    <svg viewBox="0 0 13 13" className="size-[13px] shrink-0">
      <circle cx="6.500" cy="6.500" r="5.800" fill="#fff" stroke="#858381" />
      {on && <circle cx="6.500" cy="6.500" r="3" fill="#222" />}
    </svg>
    <span>{label}</span>
  </div>
);

const Button = ({ children, primary = false }: { children: React.ReactNode; primary?: boolean }) => (
  <div
    className={
      "flex h-[25px] w-[83px] shrink-0 items-center justify-center rounded-[3px] border bg-linear-to-b pb-[2px] " +
      (primary ? "border-[#6f8fba] from-[#fafbfd] to-[#dbe0eb]" : "border-[#8b8987] from-white to-[#e9e8e7]")
    }
  >
    <span>{children}</span>
  </div>
);

const VectorDialog = () => (
  <div className="absolute left-[321px] top-[198px] flex h-[253px] w-[503px] flex-col overflow-hidden rounded-t-[6px] border border-black bg-[#edeceb]">
    <div className="flex h-[25px] shrink-0 items-center border-b border-[#0a0a0a] bg-linear-to-b from-[#404040] via-[#2d2d2d] to-[#1c1c1c] pl-[7px] pr-[9px] text-white shadow-[inset_0_-1px_0_#40536e]">
      <Ic className="mt-[2px] h-3 w-[14px]" vb="0 0 14 12"><rect x=".5" y=".5" width="13" height="11" fill="#e9e9e4" stroke="#aab4c0" /><rect x=".5" y=".5" width="13" height="2.500" fill="#5b86bc" /></Ic>
      <span className="flex-1 pr-[2px] text-center font-bold tracking-[0.250px]">Add vector layer</span>
      <Ic className="mt-[2px] size-[10px]" vb="0 0 10 10"><path d="M1.500 1.500l7 7M8.500 1.500l-7 7" stroke="#d5d5d5" strokeWidth="2" /></Ic>
    </div>
    <div className="flex flex-1 flex-col pl-[13px] pr-[13px] pt-[13px]">
      <div className="flex h-5 items-center pl-[1px] font-bold text-[#444]">Source type</div>
      <div className="mt-[5px] flex h-5 items-center pl-[21px]">
        <Radio label="File" on w="w-[67px]" />
        <Radio label="Directory" w="w-[129px]" />
        <Radio label="Database" w="w-[128px]" />
        <Radio label="Protocol" w="w-[90px]" />
      </div>
      <div className="mt-[9px] flex h-[25px] items-center pl-[18px]">
        <span className="w-[68px] shrink-0 pb-[2px]">Encoding</span>
        <div className="flex h-[25px] w-[378px] shrink-0 items-center rounded-[3px] border border-[#8b8987] bg-linear-to-b from-white to-[#e9e8e7] pl-1">
          <span className="flex-1 pb-[2px]">System</span>
          <div className="flex h-[17px] w-5 items-center justify-center border-l border-[#b5b3b1] pr-[2px]">
            <Ic className="h-[11px] w-2" vb="0 0 8 11"><path d="M1 4.200L4 1.300l3 2.900M1 6.800l3 2.900 3-2.900" stroke="#222" strokeWidth="1.500" /></Ic>
          </div>
        </div>
      </div>
      <div className="mt-[22px] flex h-5 items-center pl-[1px] font-bold text-[#444]">Source</div>
      <div className="mt-[6px] flex h-[25px] items-center pl-[18px]">
        <span className="w-[59px] shrink-0 pb-[2px]">Dataset</span>
        <div className="mr-2 flex h-[25px] w-[296px] shrink-0 items-center justify-end overflow-hidden rounded-[3px] border border-[#6f6d6b] bg-white pb-[2px] pr-[4px] text-[#222]">
          <div className="flex w-[289px] justify-end overflow-hidden">
            <span className="whitespace-nowrap">/ads900/qgis_vis_data/ACT_Sections.geojson</span>
          </div>
        </div>
        <Button>Browse</Button>
      </div>
      <div className="mt-[21px] flex">
        <Button>Help</Button>
        <div className="ml-auto flex gap-2">
          <Button><u className="underline-offset-2">C</u>ancel</Button>
          <Button primary>Open</Button>
        </div>
      </div>
    </div>
  </div>
);

/* ---------- status bar ---------- */

const StatusBar = () => (
  <div className="flex h-[41px] shrink-0 items-start border-t border-[#aaa8a6] pl-[75px]">
    <span className="mt-[9px] w-[77px]">Coordinate</span>
    <div className="mt-[5px] flex h-[25px] w-36 items-center justify-center rounded-[3px] border border-[#6f6d6b] bg-white pb-[2px]">148.638,-35.172</div>
    <div className="ml-[2px] mt-[3px] flex h-[30px] w-[18px] items-center justify-center rounded-[3px] border border-[#8b8987] bg-linear-to-b from-white to-[#e6e5e3]">
      <Ic className="h-[20px] w-[17px]" vb="0 0 17 20">
        <g transform="rotate(-28 8 10)"><rect x="3.500" y="1.500" width="9.500" height="17" rx="4.700" fill="#eee" stroke="#1c1c1c" strokeWidth="1.800" /><path d="M4 8.500h9M8.200 2v6.500M6 3.500v4M10.500 3.500v4" stroke="#1c1c1c" strokeWidth="1.500" /><circle cx="8.200" cy="13.500" r="2" stroke="#1c1c1c" strokeWidth="1.400" /></g>
        <path d="M11 4l5-2" stroke="#333" strokeDasharray="1.500 1" />
      </Ic>
    </div>
    <span className="ml-[10px] mt-[10px] w-[46px]">Scale</span>
    <div className="mt-[6px] flex h-[25px] w-[113px] overflow-hidden rounded-[3px] border border-[#6f6d6b] bg-white">
      <span className="flex w-[87px] items-center pb-[2px] pl-[3px]">1:375,754</span>
      <div className="flex flex-1 items-center justify-center border-l border-[#8b8987] bg-linear-to-b from-white to-[#e6e5e3]"><Chev dark /></div>
    </div>
    <span className="ml-[11px] mt-[10px] w-[65px]">Rotation</span>
    <div className="mt-[3px] flex h-[31px] w-[116px] overflow-hidden rounded-[3px] border border-[#6f6d6b] bg-white">
      <span className="flex flex-1 items-center pb-[2px] pl-1">0.0</span>
      <div className="flex w-[14px] flex-col border-l border-[#8b8987] bg-linear-to-b from-white to-[#e6e5e3]">
        <div className="flex flex-1 items-center justify-center border-b border-[#a5a3a1]"><Ic className="h-[5px] w-2" vb="0 0 8 5"><path d="M1 4l3-3 3 3" stroke="#222" strokeWidth="1.400" /></Ic></div>
        <div className="flex flex-1 items-center justify-center"><Ic className="h-[5px] w-2" vb="0 0 8 5"><path d="M1 1l3 3 3-3" stroke="#222" strokeWidth="1.400" /></Ic></div>
      </div>
    </div>
    <div className="ml-[9px] mt-[11px] flex"><Check /></div>
    <span className="ml-[8px] mt-[9px] w-[65px]">Render</span>
    <Ic className="mt-[7px] h-[22px] w-[21px]" vb="0 0 22 22">
      <g stroke="#222"><circle cx="11" cy="11" r="9.500" fill="#f4f4f4" strokeWidth="2" /><ellipse cx="11" cy="11" rx="4.500" ry="9.500" strokeWidth="1.300" /><ellipse cx="11" cy="11" rx="9.500" ry="4.500" strokeWidth="1.300" /><path d="M4.500 4.500h13v13h-13zM1 11h20M11 1v20" strokeWidth=".9" /></g>
    </Ic>
    <span className="ml-[4px] mt-[10px] w-[135px] whitespace-nowrap">EPSG:4326 (OTF)</span>
    <Ic className="mt-[8px] h-[23px] w-6" vb="0 0 24 23"><ellipse cx="12" cy="10" rx="11.500" ry="9.700" fill="#666" /><path d="M12 18c3 2 6 4 9.500 4-2-1.500-2.500-3.500-2.500-6z" fill="#666" /><g fill="#fff"><circle cx="6.500" cy="10" r="1.700" /><circle cx="12" cy="10" r="1.700" /><circle cx="17.500" cy="10" r="1.700" /></g></Ic>
    <Ic className="ml-auto mr-1 mt-[23px] size-3" vb="0 0 12 12">
      <g fill="#a3a19e">{[[9, 0], [9, 3], [6, 3], [9, 6], [6, 6], [3, 6], [9, 9], [6, 9], [3, 9], [0, 9]].map(([x, y]) => <rect key={`${x}-${y}`} x={x} y={y} width="1" height="1" />)}</g>
    </Ic>
  </div>
);

/* ---------- window ---------- */

const menus: [string, string, string, string][] = [
  ["Pro", "j", "ect", "w-[64px]"],
  ["", "E", "dit", "w-[44px]"],
  ["", "V", "iew", "w-[50px]"],
  ["", "L", "ayer", "w-[56px]"],
  ["", "S", "ettings", "w-[72px]"],
  ["", "P", "lugins", "w-[66px]"],
  ["Vect", "o", "r", "w-[61px]"],
  ["", "R", "aster", "w-[62px]"],
  ["", "D", "atabase", "w-[81px]"],
  ["", "W", "eb", "w-[47px]"],
  ["Pro", "c", "essing", "w-[89px]"],
  ["", "H", "elp", "w-[40px]"],
];

export default function App() {
  return (
    <div className="relative h-[679px] w-[1008px] overflow-hidden bg-linear-to-r from-[#090d28] via-[#101c4c] to-[#16265f] pl-[5px] pt-[5px] font-['DejaVu_Sans_Condensed','DejaVu_Sans',sans-serif] text-[14.5px] leading-4 text-[#111] [font-stretch:semi-condensed]">
      <div className="flex h-[667px] w-[997px] flex-col overflow-hidden rounded-t-[7px] border border-[#c9c7c5] bg-[#edeceb]">
        <div className="flex h-[25px] shrink-0 items-center pl-[5px] pr-[9px]">
          <Ic className="size-4" vb="0 0 16 16"><path d="M7.500 2.500C3 2.500 1 6 1.500 9.500 2 13 5 14.500 8 13.500l2 1.500 3-1-2-2.500c2-3 1.500-6-.5-8z" fill="#d6e04a" stroke="#a8b52a" strokeWidth=".8" /><path d="M7 9c1-3 3-6 7-8.500C14.500 4 13 7 9 9l-6 5z" fill="#2c8a2c" /><path d="M2 14.500L13 2" stroke="#175a17" /></Ic>
          <span className="flex-1 pb-[2px] pr-[4px] text-center font-bold tracking-[0.220px] text-[#797775]">QGIS 2.14.8-Essen - qgis_vis</span>
          <Ic className="mt-[1px] h-3 w-[54px]" vb="0 0 54 12"><path d="M1 9h8" stroke="#6a6866" strokeWidth="2" /><rect x="23.500" y="2.500" width="7" height="7" stroke="#6a6866" strokeWidth="1.600" /><path d="M45.500 2l7 8M52.500 2l-7 8" stroke="#6a6866" strokeWidth="2.200" /></Ic>
        </div>
        <div className="flex h-[25px] shrink-0 items-center border-b border-[#bcbab8] bg-linear-to-b from-[#edeceb] to-[#e4e3e1] pl-[12px]">
          {menus.map(([a, b, c, w]) => (
            <span key={a + b + c} className={"shrink-0 " + w}>{a}<u className="underline-offset-2">{b}</u>{c}</span>
          ))}
        </div>
        <MainToolbar />
        <EditToolbar />
        <div className="flex min-h-0 flex-1">
          <SideToolbar />
          <LayersPanel />
          <div className="flex w-[6px] shrink-0 items-center justify-center"><Grip /></div>
          <div className="flex flex-1 border border-[#989694] bg-white pl-[93px] pt-[11px]">
            <svg viewBox="0 0 536 470" className="h-[470px] w-[536px] shrink-0 bg-[#f7fcf5]" shapeRendering="crispEdges">
              <path d={forestPath} fill="#00441b" />
            </svg>
          </div>
        </div>
        <StatusBar />
      </div>
      <VectorDialog />
    </div>
  );
}
